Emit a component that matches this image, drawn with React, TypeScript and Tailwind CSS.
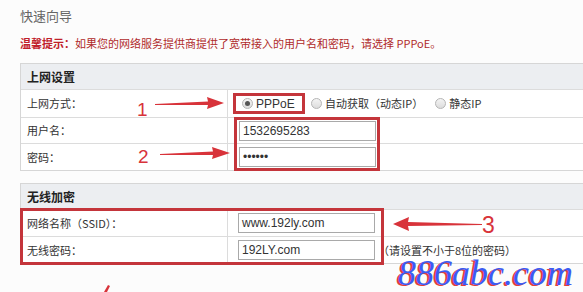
import React from 'react';

const cjk = { fontFamily: '"Noto Sans CJK SC", "Liberation Sans", sans-serif' };

const Radio: React.FC<{ checked?: boolean }> = ({ checked }) => (
  <span className="inline-flex w-[11px] h-[11px] rounded-full border border-[#b5b5b5] bg-gradient-to-b from-[#f4f4f4] to-[#dcdcdc] items-center justify-center mr-[3px]">
    {checked && <span className="w-[5px] h-[5px] rounded-full bg-[#555]" />}
  </span>
);

const Row: React.FC<{ label: string; children?: React.ReactNode; h: string }> = ({ label, children, h }) => (
  <div className={`flex border-t border-[#dcdcdc] bg-white ${h}`}>
    <div className="w-[207px] shrink-0 border-r border-[#dcdcdc] flex items-center pl-[6px] text-[11px] text-[#333]">{label}</div>
    <div className="flex-1 flex items-center">{children}</div>
  </div>
);

const Field: React.FC<{ value: string }> = ({ value }) => (
  <div className="w-[137px] h-[20px] border border-[#a9a9a9] bg-white flex items-center pl-[3px] text-[12px] text-[#333]" style={{ fontFamily: '"Liberation Sans", Arial, sans-serif' }}>
    {value}
  </div>
);

const App: React.FC = () => {
  return (
    <div className="relative w-[583px] h-[292px] overflow-hidden bg-[#fcfcfc]" style={cjk}>
      <div className="pl-[20px] pt-[8px]">
        <div className="text-[13px] text-[#666] leading-[16px]">快速向导</div>
        <div className="mt-[12px] text-[11px] leading-[14px] text-[#b02a2a]">
          <span className="font-bold text-[#c0202a]">温馨提示：</span>
          如果您的网络服务提供商提供了宽带接入的用户名和密码，请选择 PPPoE。
        </div>

        <div className="mt-[13px] w-[590px] border border-[#d6d6d6]">
          <div className="h-[25px] bg-[#eceef1] flex items-center pl-[6px] text-[12px] font-bold text-[#222]">上网设置</div>
          <Row label="上网方式：" h="h-[28px]">
            <div className="flex items-center text-[11px] text-[#333]">
              <div className="ml-[5px] h-[21px] w-[72px] border-[3px] border-[#c4353b] flex items-center pl-[6px]">
                <Radio checked />
                <span style={{ fontFamily: '"Liberation Sans", Arial, sans-serif' }} className="text-[12px]">PPPoE</span>
              </div>
              <span className="ml-[6px] flex items-center"><Radio />自动获取（动态IP）</span>
              <span className="ml-[12px] flex items-center"><Radio />静态IP</span>
            </div>
          </Row>
          <Row label="用户名：" h="h-[26px]">
            <div className="ml-[11px]"><Field value="1532695283" /></div>
          </Row>
          <Row label="密码：" h="h-[27px]">
            <div className="ml-[11px]"><Field value="••••••" /></div>
          </Row>
        </div>

        <div className="mt-[12px] w-[590px] border border-[#d6d6d6]">
          <div className="h-[25px] bg-[#eceef1] flex items-center pl-[6px] text-[12px] font-bold text-[#222]">无线加密</div>
          <Row label="网络名称（SSID）：" h="h-[27px]">
            <div className="ml-[10px]"><Field value="www.192ly.com" /></div>
          </Row>
          <Row label="无线密码：" h="h-[27px]">
            <div className="ml-[10px] flex items-center">
              <Field value="192LY.com" />
              <span className="ml-[3px] text-[11px] text-[#333]">（请设置不小于8位的密码）</span>
            </div>
          </Row>
        </div>
      </div>

      {/* annotations */}
      <div className="absolute left-[234px] top-[117px] w-[146px] h-[54px] border-[3px] border-[#c4353b] pointer-events-none" />
      <div className="absolute left-[20px] top-[208px] w-[364px] h-[57px] border-[3px] border-[#c4353b] pointer-events-none" />

      <svg className="absolute left-0 top-0 pointer-events-none" width="583" height="292" viewBox="0 0 583 292">
        <g fill="#d8333a">
          <polygon points="155,104 208,101.5 207,97 224,103 207,109 208,105 155,105" />
          <polygon points="160,154 213,151.5 212,147 230,153 212,159 213,155 160,155" />
          <polygon points="482,224 408,222 409,217 393,224 409,231 408,226 482,225" />
          <polygon points="104,292 108,285 110,286 107,292" />
        </g>
        <g fill="#d8333a" fontFamily="Liberation Sans, Arial, sans-serif">
          <text x="137" y="116" fontSize="19">1</text>
          <text x="138" y="163" fontSize="19">2</text>
          <text x="482" y="233" fontSize="23">3</text>
        </g>
      </svg>

      <div
        className="absolute left-[398px] top-[258px] text-[36px] italic leading-[30px] text-[#3b5cf2] [text-shadow:-2px_1px_0_#e0403a] pointer-events-none"
        style={{ fontFamily: '"Liberation Serif", "Times New Roman", serif' }}
      >
        886abc.com
      </div>
    </div>
  );
};

export default App;
